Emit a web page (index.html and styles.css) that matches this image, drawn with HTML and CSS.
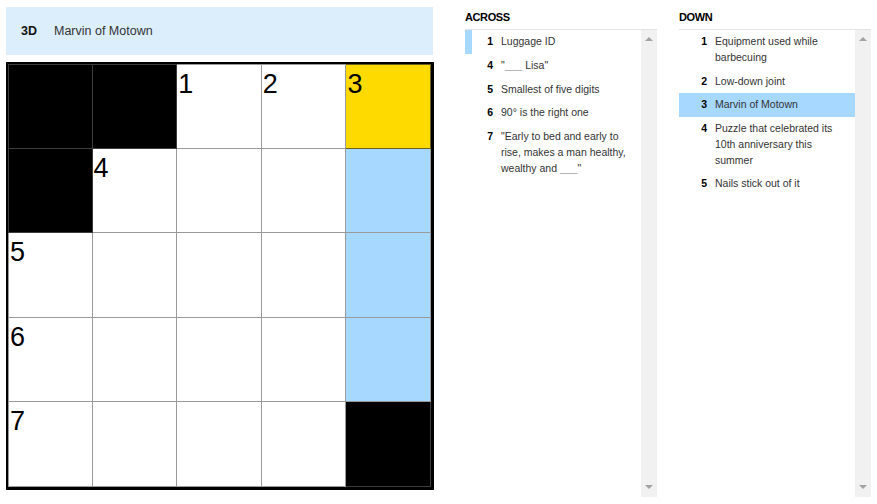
FILE: index.html
```html
<!DOCTYPE html>
<html lang="en">
<head>
    <meta charset="UTF-8">
    <meta name="viewport" content="width=device-width, initial-scale=1.0">
    <title>Mini Crossword</title>
    <link rel="stylesheet" href="styles.css">
</head>
<body>
    <div class="app">
        <!-- left side: current clue + board -->
        <div class="board">
            <div class="clue-bar">
                <span class="clue-label">3D</span>
                <span class="clue-text">Marvin of Motown</span>
            </div>
            <div class="grid">
                <div class="cell black"></div>
                <div class="cell black"></div>
                <div class="cell"><span class="num">1</span></div>
                <div class="cell"><span class="num">2</span></div>
                <div class="cell selected"><span class="num">3</span></div>

                <div class="cell black"></div>
                <div class="cell"><span class="num">4</span></div>
                <div class="cell"></div>
                <div class="cell"></div>
                <div class="cell word"></div>

                <div class="cell"><span class="num">5</span></div>
                <div class="cell"></div>
                <div class="cell"></div>
                <div class="cell"></div>
                <div class="cell word"></div>

                <div class="cell"><span class="num">6</span></div>
                <div class="cell"></div>
                <div class="cell"></div>
                <div class="cell"></div>
                <div class="cell word"></div>

                <div class="cell"><span class="num">7</span></div>
                <div class="cell"></div>
                <div class="cell"></div>
                <div class="cell"></div>
                <div class="cell black"></div>
            </div>
        </div>

        <!-- across clues -->
        <div class="clue-list">
            <h2 class="list-title">ACROSS</h2>
            <div class="list-box">
                <ol class="clues">
                    <li class="clue cross"><span class="clue-num">1</span><span class="clue-body">Luggage ID</span></li>
                    <li class="clue"><span class="clue-num">4</span><span class="clue-body">"<span class="blank">&nbsp;&nbsp;&nbsp;&nbsp;&nbsp;&nbsp;</span> Lisa"</span></li>
                    <li class="clue"><span class="clue-num">5</span><span class="clue-body">Smallest of five digits</span></li>
                    <li class="clue"><span class="clue-num">6</span><span class="clue-body">90° is the right one</span></li>
                    <li class="clue"><span class="clue-num">7</span><span class="clue-body">"Early to bed and early to rise, makes a man healthy, wealthy and <span class="blank">&nbsp;&nbsp;&nbsp;&nbsp;&nbsp;&nbsp;</span>"</span></li>
                </ol>
                <div class="scrollbar"><span class="arrow up"></span><span class="arrow down"></span></div>
            </div>
        </div>

        <!-- down clues -->
        <div class="clue-list down">
            <h2 class="list-title">DOWN</h2>
            <div class="list-box">
                <ol class="clues">
                    <li class="clue"><span class="clue-num">1</span><span class="clue-body">Equipment used while barbecuing</span></li>
                    <li class="clue"><span class="clue-num">2</span><span class="clue-body">Low-down joint</span></li>
                    <li class="clue active"><span class="clue-num">3</span><span class="clue-body">Marvin of Motown</span></li>
                    <li class="clue"><span class="clue-num">4</span><span class="clue-body">Puzzle that celebrated its 10th anniversary this summer</span></li>
                    <li class="clue"><span class="clue-num">5</span><span class="clue-body">Nails stick out of it</span></li>
                </ol>
                <div class="scrollbar"><span class="arrow up"></span><span class="arrow down"></span></div>
            </div>
        </div>
    </div>
</body>
</html>
```

FILE: styles.css
```css
body {
    margin: 0;
    padding: 7px 0 0 6px;
    background-color: #fff;
    font-family: 'Liberation Sans', Arial, sans-serif;
    color: #121212;
}

.app {
    display: flex;
    align-items: flex-start;
}

.board {
    width: 428px;
}

.clue-bar {
    display: flex;
    align-items: center;
    height: 48px;
    padding-left: 15px;
    background-color: #dcedfc;
    font-size: 12.5px;
    width: 427px;
    box-sizing: border-box;
}

.clue-label {
    font-weight: bold;
    margin-right: 17px;
}

.clue-text {
    color: #333;
}

.grid {
    display: grid;
    grid-template-columns: repeat(5, 1fr);
    grid-template-rows: repeat(5, 1fr);
    margin-top: 7px;
    width: 428px;
    height: 428px;
    box-sizing: border-box;
    border: 2px solid #000;
    border-right-width: 3px;
    border-bottom-width: 3px;
}

.cell {
    background-color: #fff;
    border-right: 1px solid #9a9a9a;
    border-bottom: 1px solid #9a9a9a;
    padding: 6px 0 0 1px;
    font-size: 27px;
    line-height: 27px;
    color: #000;
}

.cell:nth-child(-n+5) {
    border-top: 1px solid #9a9a9a;
}

.cell:nth-child(5n+1) {
    border-left: 1px solid #9a9a9a;
}

.cell.black {
    background-color: #000;
    border-color: #3c3c3c;
}

.cell.selected {
    background-color: #ffda00;
    border-color: #6b6020;
}

.cell.word {
    background-color: #a7d8ff;
}

.clue-list {
    margin-left: 31px;
    width: 192px;
}

.clue-list.down {
    margin-left: 22px;
}

.list-title {
    margin: 0;
    height: 22px;
    line-height: 21px;
    font-size: 11px;
    letter-spacing: -0.4px;
    font-weight: bold;
    color: #000;
    border-bottom: 1px solid #e3e3e3;
}

.list-box {
    display: flex;
    height: 467px;
}

.clues {
    flex: 1;
    list-style: none;
    margin: 0;
    padding: 0;
}

.clue {
    display: flex;
    position: relative;
    padding: 4px 10px 4px 0;
    font-size: 10.5px;
    line-height: 15.75px;
    color: #333;
}

.clue-num {
    flex: 0 0 28px;
    text-align: right;
    font-weight: bold;
    color: #000;
}

.clue-body {
    margin-left: 8px;
}

.blank {
    text-decoration: underline;
    text-decoration-color: #b5b5b5;
}

.clue.cross::before {
    content: '';
    position: absolute;
    left: 0;
    top: 0;
    bottom: 0;
    width: 7px;
    background-color: #a7d8ff;
}

.clue.active {
    background-color: #a7d8ff;
}

.scrollbar {
    display: flex;
    flex-direction: column;
    justify-content: space-between;
    align-items: center;
    width: 16px;
    padding: 7px 0 8px;
    box-sizing: border-box;
    background-color: #f1f1f1;
}

.arrow {
    width: 0;
    height: 0;
    border-left: 4px solid transparent;
    border-right: 4px solid transparent;
}

.arrow.up {
    border-bottom: 4px solid #a3a3a3;
}

.arrow.down {
    border-top: 4px solid #a3a3a3;
}
```
